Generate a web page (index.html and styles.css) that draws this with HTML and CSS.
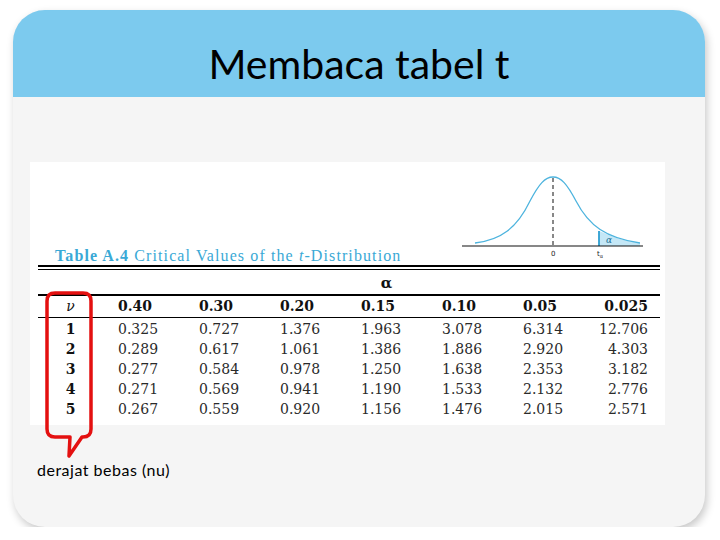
FILE: index.html
```html
<!DOCTYPE html>
<html>
<head>
<meta charset="utf-8">
<link rel="stylesheet" href="styles.css">
</head>
<body>
<div class="slide">
  <div class="header"><h1 class="title">Membaca tabel t</h1></div>
  <div class="content">
    <div class="figure">
      <div class="fig-top">
        <div class="caption"><b>Table A.4</b> Critical Values of the <i>t</i>-Distribution</div>
        <svg class="dist" width="190" height="96" viewBox="0 0 190 96">
          <path d="M144,80 L144,65 C156,70 168,75 185,77 L185,80 Z" fill="#c4e7f6"/>
          <path d="M20,77 C46,74 62,62 75,35 C84,18 90,11 98,11 C106,11 112,18 121,35 C134,60 151,72 185,77" fill="none" stroke="#4eb4de" stroke-width="1.3"/>
          <line x1="144" y1="65" x2="144" y2="80" stroke="#2d9fd2" stroke-width="1.8"/>
          <line x1="98" y1="12" x2="98" y2="80" stroke="#111" stroke-width="1" stroke-dasharray="4 3"/>
          <line x1="7" y1="80" x2="188" y2="80" stroke="#111" stroke-width="1.2"/>
          <text x="151" y="77" class="svg-alpha">α</text>
          <text x="96" y="90" class="svg-small">0</text>
          <text x="142" y="90" class="svg-small">t<tspan class="svg-sub" dy="1.5">α</tspan></text>
        </svg>
      </div>
      <div class="rules"></div>
      <div class="table">
        <div class="alpha-row">α</div>
        <div class="trow thead">
          <div class="c0 nu">ν</div>
          <div>0.40</div><div>0.30</div><div>0.20</div><div>0.15</div><div>0.10</div><div>0.05</div><div class="last">0.025</div>
        </div>
        <div class="tbody">
          <div class="trow">
            <div class="c0">1</div>
            <div>0.325</div><div>0.727</div><div>1.376</div><div>1.963</div><div>3.078</div><div>6.314</div><div class="last">12.706</div>
          </div>
          <div class="trow">
            <div class="c0">2</div>
            <div>0.289</div><div>0.617</div><div>1.061</div><div>1.386</div><div>1.886</div><div>2.920</div><div class="last">4.303</div>
          </div>
          <div class="trow">
            <div class="c0">3</div>
            <div>0.277</div><div>0.584</div><div>0.978</div><div>1.250</div><div>1.638</div><div>2.353</div><div class="last">3.182</div>
          </div>
          <div class="trow">
            <div class="c0">4</div>
            <div>0.271</div><div>0.569</div><div>0.941</div><div>1.190</div><div>1.533</div><div>2.132</div><div class="last">2.776</div>
          </div>
          <div class="trow">
            <div class="c0">5</div>
            <div>0.267</div><div>0.559</div><div>0.920</div><div>1.156</div><div>1.476</div><div>2.015</div><div class="last">2.571</div>
          </div>
        </div>
      </div>
    </div>
    <p class="note">derajat bebas (nu)</p>
  </div>
  <svg class="callout" width="100" height="460" viewBox="0 0 100 460">
    <path d="M42,283 H70 Q78,283 78,291 V419 Q78,427 70,427 H69 L56,446 L57,427 H42 Q34,427 34,419 V291 Q34,283 42,283 Z" fill="none" stroke="#e41010" stroke-width="3.5" stroke-linejoin="round"/>
  </svg>
</div>
</body>
</html>
```
FILE: styles.css
```css
html, body {
  margin: 0;
  padding: 0;
  background: #ffffff;
}

.slide {
  position: relative;
  margin: 10px 0 0 13px;
  width: 692px;
  height: 517px;
  border-radius: 32px;
  overflow: hidden;
  background: #f5f5f5;
  box-shadow: 2px 4px 8px rgba(0, 0, 0, 0.22);
}

.header {
  height: 87px;
  background: #7ccaee;
  display: flex;
  justify-content: center;
}

.title {
  margin: 0;
  padding-top: 33px;
  font-family: Lato, "Open Sans", sans-serif;
  font-weight: normal;
  font-size: 41px;
  line-height: 41px;
  color: #000;
}

.content {
  padding: 65px 0 0 17px;
}

.figure {
  width: 635px;
  height: 263px;
  background: #ffffff;
  font-family: "DejaVu Serif", serif;
}

.fig-top {
  height: 100px;
  display: flex;
  justify-content: space-between;
  align-items: flex-end;
  padding: 0 20px 0 25px;
}

.caption {
  font-family: "Liberation Serif", serif;
  font-size: 16px;
  line-height: 18px;
  letter-spacing: 1.1px;
  color: #3aa9d6;
  margin-bottom: -3px;
}

.caption b {
  font-weight: bold;
}

.dist {
  display: block;
}

.svg-alpha {
  font-family: "DejaVu Serif", serif;
  font-style: italic;
  font-size: 9px;
  fill: #1d6f95;
}

.svg-small {
  font-family: "DejaVu Sans", sans-serif;
  font-size: 7px;
  fill: #222;
}

.svg-sub {
  font-size: 5px;
}

.rules {
  margin: 3px 5px 0 8px;
  height: 2px;
  border-top: 2px solid #000;
  border-bottom: 1px solid #000;
}

.table {
  margin: 0 5px 0 8px;
  font-size: 14px;
  color: #2a2a2a;
}

.alpha-row {
  height: 26px;
  line-height: 26px;
  padding-left: 75px;
  text-align: center;
  font-weight: bold;
  font-size: 15px;
  color: #111;
  border-bottom: 2px solid #000;
  box-sizing: border-box;
}

.trow {
  display: grid;
  grid-template-columns: 75px repeat(6, 81px) 1fr;
  height: 20px;
  line-height: 20px;
}

.trow > div {
  padding-left: 5px;
  white-space: nowrap;
}

.trow > .c0 {
  padding: 0 10px 0 0;
  text-align: center;
  font-weight: bold;
  color: #111;
}

.trow > .last {
  padding: 0 12px 0 0;
  text-align: right;
}

.thead {
  font-weight: bold;
  color: #111;
  border-bottom: 1px solid #000;
  height: 21px;
}

.thead > .nu {
  font-style: italic;
  font-weight: normal;
}

.tbody {
  padding-top: 1px;
}

.note {
  margin: 36px 0 0 7px;
  font-family: Lato, "Open Sans", sans-serif;
  font-size: 16px;
  line-height: 18px;
  letter-spacing: 0.5px;
  color: #000;
}

.callout {
  position: absolute;
  left: 0;
  top: 0;
}
```
